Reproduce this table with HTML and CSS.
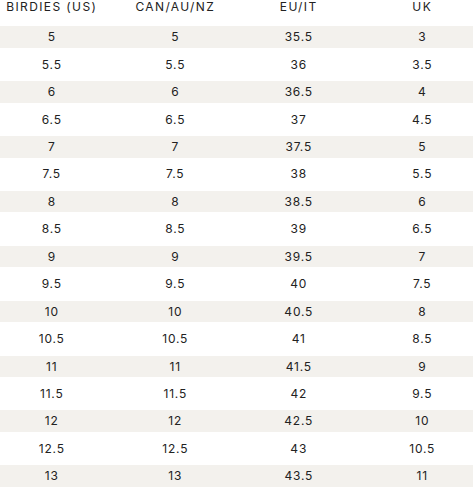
FILE: index.html
```html
<!DOCTYPE html>
<html lang="en">
<head>
    <meta charset="UTF-8">
    <meta name="viewport" content="width=device-width, initial-scale=1.0">
    <title>Size Chart</title>
    <link rel="stylesheet" href="styles.css">
</head>
<body>
    <div class="chart">
        <div class="row head">
            <div>BIRDIES (US)</div>
            <div>CAN/AU/NZ</div>
            <div>EU/IT</div>
            <div>UK</div>
        </div>
        <div class="row"><div>5</div><div>5</div><div>35.5</div><div>3</div></div>
        <div class="row"><div>5.5</div><div>5.5</div><div>36</div><div>3.5</div></div>
        <div class="row"><div>6</div><div>6</div><div>36.5</div><div>4</div></div>
        <div class="row"><div>6.5</div><div>6.5</div><div>37</div><div>4.5</div></div>
        <div class="row"><div>7</div><div>7</div><div>37.5</div><div>5</div></div>
        <div class="row"><div>7.5</div><div>7.5</div><div>38</div><div>5.5</div></div>
        <div class="row"><div>8</div><div>8</div><div>38.5</div><div>6</div></div>
        <div class="row"><div>8.5</div><div>8.5</div><div>39</div><div>6.5</div></div>
        <div class="row"><div>9</div><div>9</div><div>39.5</div><div>7</div></div>
        <div class="row"><div>9.5</div><div>9.5</div><div>40</div><div>7.5</div></div>
        <div class="row"><div>10</div><div>10</div><div>40.5</div><div>8</div></div>
        <div class="row"><div>10.5</div><div>10.5</div><div>41</div><div>8.5</div></div>
        <div class="row"><div>11</div><div>11</div><div>41.5</div><div>9</div></div>
        <div class="row"><div>11.5</div><div>11.5</div><div>42</div><div>9.5</div></div>
        <div class="row"><div>12</div><div>12</div><div>42.5</div><div>10</div></div>
        <div class="row"><div>12.5</div><div>12.5</div><div>43</div><div>10.5</div></div>
        <div class="row"><div>13</div><div>13</div><div>43.5</div><div>11</div></div>
    </div>
</body>
</html>
```

FILE: styles.css
```css
html, body {
    margin: 0;
    padding: 0;
    overflow: hidden;
    background-color: #fff;
}
body {
    font-family: Inter, "Liberation Sans", sans-serif;
    color: #222;
}
.chart {
    margin: 0 -11px 0 -10px;
}
.row {
    display: grid;
    grid-template-columns: repeat(4, 1fr);
    height: 21.5px;
    padding: 2.97px 0;
    background-clip: content-box;
    font-size: 12px;
    line-height: 21.5px;
    letter-spacing: 0.8px;
    text-align: center;
}
.row:nth-child(even) {
    background-color: #f3f1ed;
}
.row.head {
    height: 13px;
    padding: 0 0 10.3px;
    line-height: 13px;
    letter-spacing: 1.4px;
}
```
